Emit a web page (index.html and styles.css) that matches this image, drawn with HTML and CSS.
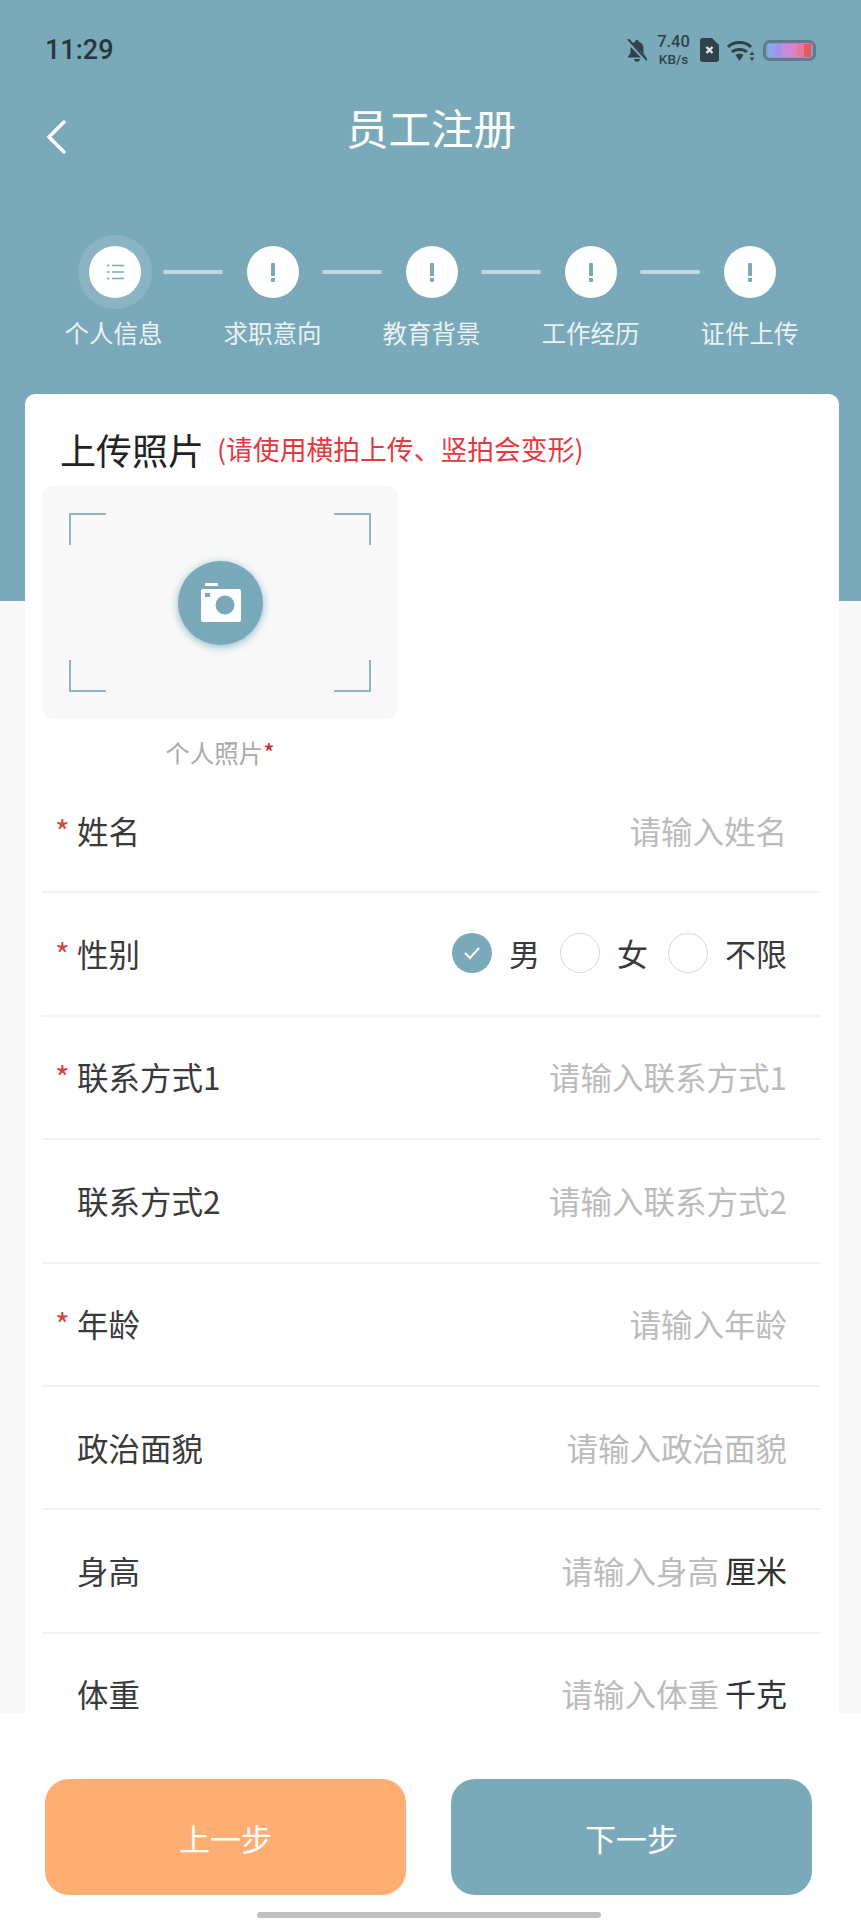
FILE: index.html
```html
<!DOCTYPE html>
<html lang="zh">
<head>
    <meta charset="utf-8">
    <title>员工注册</title>
    <link rel="stylesheet" href="styles.css">
</head>
<body>
    <div class="page">
        <div class="scroll">
            <div class="header">
                <div class="status">
                    <span class="time">11:29</span>
                    <div class="status-icons">
                        <svg class="bell" width="20" height="23" viewBox="0 0 20 23">
                            <path fill="#2f4249" d="M10 1c1 0 1.700.7 1.800 1.700 3 .8 4.700 3.300 4.700 6.300v5l2.500 3.500v1H1v-1L3.500 14V9C3.500 6 5.200 3.500 8.200 2.700 8.300 1.700 9 1 10 1zM7 20h6c0 1.500-1.300 2.700-3 2.700S7 21.500 7 20z"/>
                            <path stroke="#7aaaba" stroke-width="4" d="M0 1l20 21"/>
                            <path stroke="#2f4249" stroke-width="2" d="M1 0l19 21"/>
                        </svg>
                        <div class="speed">
                            <span class="speed-num">7.40</span>
                            <span class="speed-unit">KB/s</span>
                        </div>
                        <svg width="19" height="24" viewBox="0 0 19 24">
                            <path fill="#2f4249" d="M3 0h9l7 7v14a3 3 0 0 1-3 3H3a3 3 0 0 1-3-3V3a3 3 0 0 1 3-3z"/>
                            <path stroke="#dfe8eb" stroke-width="2.400" d="M6.500 9l6 6M12.500 9l-6 6"/>
                        </svg>
                        <svg width="28" height="23" viewBox="0 0 28 23">
                            <g fill="none" stroke="#2f4249" stroke-width="3">
                                <path d="M1 8c5.500-6 17.500-6 23 0"/>
                                <path d="M5 13c3.500-3.500 11.500-3.500 15 0"/>
                            </g>
                            <path fill="#2f4249" d="M8.500 16c2.500-2 5.500-2 8 0l-4 6z"/>
                            <path fill="#2f4249" d="M25 12.500l2.500 3.500h-5zM25 22l-2.500-3.500h5z"/>
                        </svg>
                        <div class="battery">
                            <i class="cell1"></i><i class="cell2"></i><i class="cell3"></i><i class="cell4"></i><i class="cell5"></i><i class="cell6"></i>
                        </div>
                    </div>
                </div>
                <div class="nav">
                    <svg class="back" width="20" height="34" viewBox="0 0 20 34">
                        <path fill="none" stroke="#fff" stroke-width="3.500" stroke-linecap="round" d="M18 2L3 17l15 15"/>
                    </svg>
                    <span class="title">员工注册</span>
                </div>
                <div class="step-dots">
                    <span class="dot dot-active">
                        <svg width="18" height="16" viewBox="0 0 18 16">
                            <g stroke="#7aaaba" stroke-width="1.500">
                                <path d="M1 1.500h2.500M6 1.500h12M1 8h2.500M6 8h12M1 14.500h2.500M6 14.500h12"/>
                            </g>
                        </svg>
                    </span>
                    <span class="line line-first"></span>
                    <span class="dot"><i class="mark"></i></span>
                    <span class="line"></span>
                    <span class="dot"><i class="mark"></i></span>
                    <span class="line"></span>
                    <span class="dot"><i class="mark"></i></span>
                    <span class="line"></span>
                    <span class="dot"><i class="mark"></i></span>
                </div>
                <div class="step-labels">
                    <span>个人信息</span>
                    <span>求职意向</span>
                    <span>教育背景</span>
                    <span>工作经历</span>
                    <span>证件上传</span>
                </div>
            </div>

            <div class="card">
                <div class="card-title">
                    <span class="upload">上传照片</span>
                    <span class="upload-tip">(请使用横拍上传、竖拍会变形)</span>
                </div>
                <div class="photo">
                    <span class="corner corner-tl"></span>
                    <span class="corner corner-tr"></span>
                    <span class="corner corner-bl"></span>
                    <span class="corner corner-br"></span>
                    <span class="camera">
                        <svg class="camera-icon" width="40" height="39" viewBox="0 0 40 39">
                            <path fill="#fff" d="M4 0h13v3H4zM2 6h36a2 2 0 0 1 2 2v29a2 2 0 0 1-2 2H2a2 2 0 0 1-2-2V8a2 2 0 0 1 2-2z"/>
                            <ellipse cx="24" cy="22" rx="9.500" ry="9.500" fill="#7aaaba"/>
                            <path fill="#7aaaba" d="M4 10h5v4H4z"/>
                        </svg>
                    </span>
                </div>
                <div class="photo-name">个人照片<span class="photo-star">*</span></div>

                <div class="row">
                    <span class="star">*</span>
                    <span class="label">姓名</span>
                    <span class="hint">请输入姓名</span>
                </div>
                <div class="row">
                    <span class="star">*</span>
                    <span class="label">性别</span>
                    <div class="radios">
                        <span class="radio radio-on">
                            <svg width="18" height="14" viewBox="0 0 18 14">
                                <path fill="none" stroke="#fff" stroke-width="2" d="M2 7l5 5 9-10"/>
                            </svg>
                        </span>
                        <span class="radio-text">男</span>
                        <span class="radio"></span>
                        <span class="radio-text">女</span>
                        <span class="radio"></span>
                        <span class="radio-text">不限</span>
                    </div>
                </div>
                <div class="row">
                    <span class="star">*</span>
                    <span class="label">联系方式1</span>
                    <span class="hint">请输入联系方式1</span>
                </div>
                <div class="row">
                    <span class="star"></span>
                    <span class="label">联系方式2</span>
                    <span class="hint">请输入联系方式2</span>
                </div>
                <div class="row">
                    <span class="star">*</span>
                    <span class="label">年龄</span>
                    <span class="hint">请输入年龄</span>
                </div>
                <div class="row">
                    <span class="star"></span>
                    <span class="label">政治面貌</span>
                    <span class="hint">请输入政治面貌</span>
                </div>
                <div class="row">
                    <span class="star"></span>
                    <span class="label">身高</span>
                    <span class="hint">请输入身高</span>
                    <span class="unit">厘米</span>
                </div>
                <div class="row">
                    <span class="star"></span>
                    <span class="label">体重</span>
                    <span class="hint">请输入体重</span>
                    <span class="unit">千克</span>
                </div>
            </div>
        </div>

        <div class="footer">
            <div class="buttons">
                <button class="btn btn-prev">上一步</button>
                <button class="btn btn-next">下一步</button>
            </div>
            <div class="home-bar"></div>
        </div>
    </div>
</body>
</html>
```

FILE: styles.css
```css
* {
    box-sizing: border-box;
}

body {
    margin: 0;
    background-color: #fff;
    font-family: "Noto Sans CJK SC", "Noto Sans", sans-serif;
}

.page {
    height: 1920px;
    display: flex;
    flex-direction: column;
    overflow: hidden;
}

.scroll {
    flex: 1;
    min-height: 0;
    overflow: hidden;
    background-color: #f8f8f8;
}

.header {
    height: 601px;
    background-color: #7aaaba;
}

/* status bar */
.status {
    height: 100px;
    padding: 0 45px;
    display: flex;
    align-items: center;
    justify-content: space-between;
}

.time {
    font-family: Roboto, sans-serif;
    font-weight: 500;
    font-size: 27px;
    color: #27373d;
}

.status-icons {
    display: flex;
    align-items: center;
}

.bell {
    margin-right: 10px;
}

.speed {
    width: 33px;
    margin-right: 10px;
    display: flex;
    flex-direction: column;
    align-items: center;
    color: #2f4249;
    font-family: Roboto, sans-serif;
    font-weight: 500;
}

.speed-num {
    font-size: 16.5px;
    line-height: 18px;
}

.speed-unit {
    font-size: 13.5px;
    line-height: 16px;
}

.status-icons svg + svg {
    margin-left: 8px;
}

.battery {
    width: 53px;
    height: 21px;
    margin-left: 8px;
    padding: 1px 2px;
    display: flex;
    border: 3px solid #64788f;
    border-radius: 7px;
}

.battery i {
    flex: 1;
}

.cell1 { background-color: #8fa6ec; }
.cell2 { background-color: #a690ea; }
.cell3 { background-color: #c78cdc; }
.cell4 { background-color: #d986c8; }
.cell5 { background-color: #e27a9c; }
.cell6 { background-color: #ea5562; }

/* nav */
.nav {
    height: 58px;
    padding-left: 46px;
    display: flex;
    align-items: center;
}

.back {
    margin-top: 16px;
}

.title {
    margin-left: 280px;
    padding-bottom: 6px;
    font-size: 42.5px;
    color: #fff;
}

/* steps */
.step-dots {
    margin-top: 88px;
    padding-left: 89px;
    display: flex;
    align-items: center;
}

.dot {
    width: 52px;
    height: 52px;
    flex-shrink: 0;
    border-radius: 50%;
    background-color: #fff;
    display: flex;
    align-items: center;
    justify-content: center;
}

.dot-active {
    box-shadow: 0 0 0 11px rgba(255, 255, 255, 0.12);
}

.mark {
    width: 4px;
    height: 19px;
    background: linear-gradient(#7aaaba 13px, transparent 13px, transparent 15px, #7aaaba 15px);
    border-radius: 1px;
}

.line {
    width: 60px;
    height: 4px;
    margin: 0 23.5px;
    border-radius: 2px;
    background-color: #c3d9e0;
}

.line-first {
    margin-left: 22px;
}

.step-labels {
    margin-top: 17px;
    padding-left: 34px;
    display: flex;
}

.step-labels span {
    width: 159px;
    text-align: center;
    font-size: 24.5px;
    line-height: 36px;
    color: #eaf2f4;
}

/* card */
.card {
    margin: -207px 22px 0 25px;
    padding: 27px 18px 0 17px;
    background-color: #fff;
    border-radius: 10px 10px 0 0;
    position: relative;
}

.card-title {
    height: 65px;
    padding-left: 18px;
    display: flex;
    align-items: flex-start;
    line-height: 56px;
}

.upload {
    font-size: 36px;
    color: #222;
}

.upload-tip {
    margin-left: 13px;
    font-size: 26.8px;
    color: #e23a40;
}

.photo {
    width: 356px;
    height: 233px;
    padding: 27px 27px;
    background-color: #f8f8f8;
    border-radius: 10px;
    display: grid;
    grid-template-columns: 1fr 1fr;
    grid-template-rows: 1fr 1fr;
}

.corner {
    width: 37px;
    height: 32px;
    border: 0 solid #8fb3c1;
}

.corner-tl {
    grid-area: 1 / 1;
    border-width: 2px 0 0 2px;
}

.corner-tr {
    grid-area: 1 / 2;
    justify-self: end;
    border-width: 2px 2px 0 0;
}

.corner-bl {
    grid-area: 2 / 1;
    align-self: end;
    border-width: 0 0 2px 2px;
}

.corner-br {
    grid-area: 2 / 2;
    justify-self: end;
    align-self: end;
    border-width: 0 2px 2px 0;
}

.camera {
    grid-area: 1 / 1 / 3 / 3;
    place-self: center;
    width: 85px;
    height: 84px;
    border-radius: 50%;
    background-color: #7aaaba;
    box-shadow: 0 2px 8px rgba(122, 170, 186, 0.8);
    display: flex;
    align-items: center;
    justify-content: center;
}

.camera-icon {
    margin-left: 2px;
}

.photo-name {
    width: 356px;
    margin-top: 17px;
    text-align: center;
    font-size: 24.5px;
    line-height: 34px;
    color: #aaa;
}

.photo-star {
    color: #d0212b;
}

/* form rows */
.row {
    height: 123.4px;
    padding: 0 34px 2px 13px;
    display: flex;
    align-items: center;
    border-bottom: 2px solid #f1f2f2;
    font-size: 31.5px;
    line-height: 36px;
    color: #3a3a3a;
}

.star {
    width: 22px;
    color: #d5453f;
}

.label {
    flex: 1;
}

.hint {
    color: #bbb;
}

.unit {
    margin-left: 6px;
    font-size: 31px;
    color: #333;
}

.radios {
    display: flex;
    align-items: center;
}

.radio {
    width: 40px;
    height: 40px;
    margin-left: 20px;
    border-radius: 50%;
    border: 1px solid #d8d8d8;
    display: flex;
    align-items: center;
    justify-content: center;
}

.radio-on {
    margin-left: 0;
    border: 0;
    background-color: #7aaaba;
}

.radio-text {
    margin-left: 17px;
    font-size: 31px;
}

/* footer */
.footer {
    height: 207px;
    padding: 66px 49px 0 45px;
    background-color: #fff;
    display: flex;
    flex-direction: column;
    align-items: center;
}

.buttons {
    display: flex;
    gap: 45px;
}

.btn {
    width: 361px;
    height: 116px;
    border-width: 0;
    border-radius: 24px;
    font-family: inherit;
    font-size: 31px;
    color: #fff;
}

.btn-prev {
    background-color: #ffae73;
}

.btn-next {
    background-color: #7aaaba;
}

.home-bar {
    width: 344px;
    height: 6px;
    margin-top: 17px;
    border-radius: 3px;
    background-color: #bfbfbf;
}
```
